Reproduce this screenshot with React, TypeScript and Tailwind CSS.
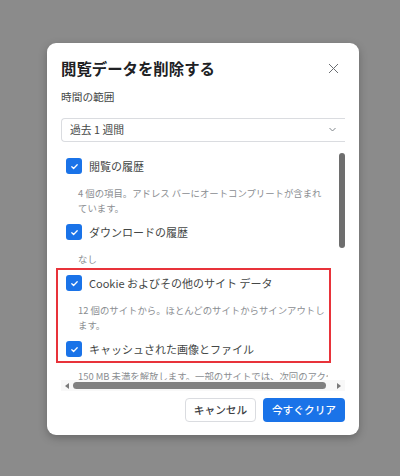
import React from "react";

const font = { fontFamily: '"Noto Sans CJK JP", "Noto Sans", sans-serif' };

function Check() {
  return (
    <span className="flex h-[16px] w-[16px] shrink-0 items-center justify-center rounded-[3px] bg-[#1a73e8]">
      <svg width="9" height="9" viewBox="0 0 10 10" fill="none">
        <path d="M2 5.2l2 2L8 3" stroke="white" strokeWidth="1.4" strokeLinecap="round" strokeLinejoin="round" />
      </svg>
    </span>
  );
}

function Item({ label, lines }: { label: string; lines: string[] }) {
  return (
    <div className="mb-[4px] flex flex-col">
      <div className="flex h-[24px] items-center gap-[7px] pl-[5px]">
        <Check />
        <span className="whitespace-nowrap text-[11px] text-[#444746]">{label}</span>
      </div>
      <div className="mt-[8px] pl-[17px] text-[9.4px] leading-[15px] text-[#8a8d91]">
        {lines.map((l) => (
          <div key={l} className="whitespace-nowrap">{l}</div>
        ))}
      </div>
    </div>
  );
}

export default function App() {
  return (
    <div className="h-[476px] w-[400px] overflow-hidden bg-[#8b8b8b] pl-[47px] pt-[43px]" style={font}>
      <div className="relative flex h-[392px] w-[312px] flex-col rounded-[9px] bg-white px-[14px] pb-[13px] pt-[15px] shadow-[0_3px_8px_rgba(0,0,0,0.25)]">
        <div className="flex h-[20px] items-center justify-between pr-[6px]">
          <h1 className="text-[15.4px] font-bold leading-[20px] text-[#202124]">閲覧データを削除する</h1>
          <svg width="11" height="11" viewBox="0 0 11 11" stroke="#6b6e72" strokeWidth="1">
            <path d="M1 1l9 9M10 1l-9 9" />
          </svg>
        </div>

        <div className="mt-[12px] text-[10.7px] leading-[14px] text-[#444746]">時間の範囲</div>

        <div className="mt-[13.5px] flex h-[24px] items-center justify-between rounded-l-[4px] border border-r-0 border-[#dadce0] pl-[8px] pr-[9px]">
          <span className="text-[10.8px] text-[#444746]">過去 1 週間</span>
          <svg width="7" height="5" viewBox="0 0 7 5" fill="none" stroke="#80868b" strokeWidth="1">
            <path d="M0.5 1l3 3 3-3" />
          </svg>
        </div>

        <div className="mt-[0.5px] flex h-[238px]">
          <div className="w-[267px] overflow-hidden pt-[12px]">
            <Item label="閲覧の履歴" lines={["4 個の項目。アドレス バーにオートコンプリートが含まれ", "ています。"]} />
            <Item label="ダウンロードの履歴" lines={["なし"]} />
            <Item label="Cookie およびその他のサイト データ" lines={["12 個のサイトから。ほとんどのサイトからサインアウトし", "ます。"]} />
            <Item
              label="キャッシュされた画像とファイル"
              lines={["150 MB 未満を解放します。一部のサイトでは、次回のアクセス時に読み込みに時間がかかる場合があります。"]}
            />
          </div>
          <div className="ml-auto pt-[11px]">
            <div className="h-[95px] w-[6px] rounded-full bg-[#6e6e6e]" />
          </div>
        </div>

        <div className="flex h-[11px] items-center bg-[#f8f8f8] pl-[4px] pr-[4px]">
          <svg width="4" height="6" viewBox="0 0 4 6" fill="#7a7a7a">
            <path d="M4 0v6L0 3z" />
          </svg>
          <div className="ml-[4px] h-[7px] w-[253px] rounded-full bg-[#808080]" />
          <svg className="ml-auto" width="4" height="6" viewBox="0 0 4 6" fill="#7a7a7a">
            <path d="M0 0v6l4-3z" />
          </svg>
        </div>

        <div className="mt-[7px] flex justify-end gap-[7px]">
          <button className="h-[24px] w-[71px] rounded-[4px] border border-[#dadce0] bg-white text-[10.7px] font-medium text-[#3c4043]">
            キャンセル
          </button>
          <button className="h-[24px] w-[82px] rounded-[4px] bg-[#1a73e8] text-[10.7px] font-medium text-white">
            今すぐクリア
          </button>
        </div>

        <div className="absolute left-[9px] top-[225px] h-[95px] w-[275px] border-2 border-[#e8333a]" />
      </div>
    </div>
  );
}
